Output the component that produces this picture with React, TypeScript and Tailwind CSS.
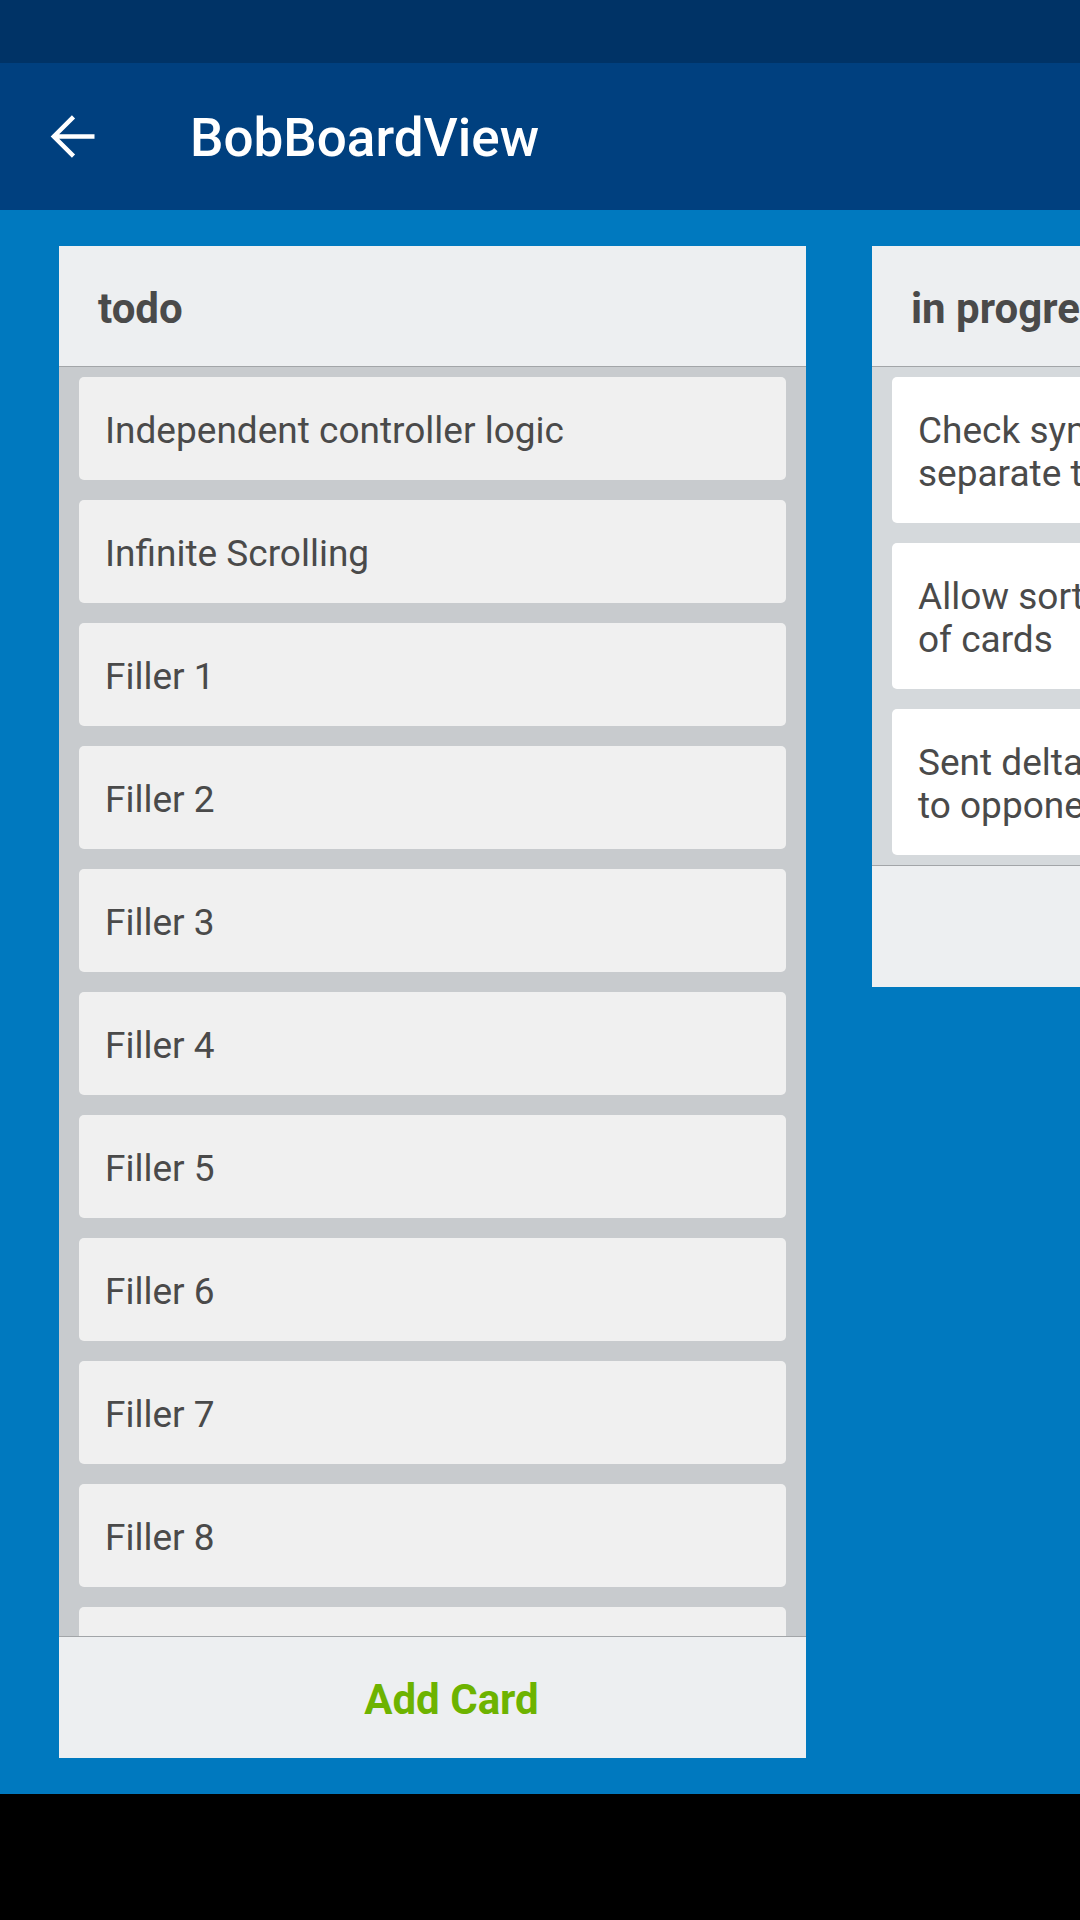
import React from 'react';

interface ColumnProps {
  title: string;
  cards: React.ReactNode[];
  listBg: string;
  cardBg: string;
  footer?: string;
  fill?: boolean;
}

function BackArrow() {
  return (
    <svg width="63" height="63" viewBox="0 0 24 24" fill="none">
      <path
        d="M20 12H4.6M12 4.5 4.5 12l7.5 7.5"
        stroke="#ffffff"
        strokeWidth="1.7"
        strokeLinejoin="miter"
      />
    </svg>
  );
}

function Column({ title, cards, listBg, cardBg, footer, fill }: ColumnProps) {
  return (
    <div
      className={`w-[747px] shrink-0 flex flex-col bg-[#edeff1] ${
        fill ? 'h-[1512px]' : 'self-start'
      }`}
    >
      {/* Column header */}
      <div className="h-[121px] shrink-0 flex items-center pl-[39px] pt-[4px] border-b border-[#a2a5a8] text-[42px] font-bold text-[#4a4a4a]">
        <span className="whitespace-nowrap">{title}</span>
      </div>

      {/* Card list */}
      <div
        className={`${listBg} ${
          fill ? 'flex-1 overflow-hidden' : 'pb-[10px]'
        } px-[20px] pt-[10px] flex flex-col gap-[20px]`}
      >
        {cards.map((c, i) => (
          <div
            key={i}
            className={`${cardBg} shrink-0 rounded-[5px] pl-[26px] pt-[32px] pb-[28px] text-[37px] leading-[43px] text-[#4a4a4a] whitespace-nowrap overflow-hidden`}
          >
            {c}
          </div>
        ))}
      </div>

      {/* Footer */}
      <div className="h-[122px] shrink-0 flex items-center justify-center pt-[4px] border-t border-[#a2a5a8]">
        {footer && (
          <span className="pl-[38px] text-[42px] font-bold text-[#6db300]">
            {footer}
          </span>
        )}
      </div>
    </div>
  );
}

export default function App() {
  const todo = [
    'Independent controller logic',
    'Infinite Scrolling',
    'Filler 1',
    'Filler 2',
    'Filler 3',
    'Filler 4',
    'Filler 5',
    'Filler 6',
    'Filler 7',
    'Filler 8',
    '',
  ];

  const inProgress = [
    <>
      Check synchronization works on
      <br />
      separate threads
    </>,
    <>
      Allow sorting and reordering
      <br />
      of cards
    </>,
    <>
      Sent deltas should be applied
      <br />
      to opponent board
    </>,
  ];

  return (
    <div
      className="w-[1080px] h-[1920px] flex flex-col bg-black overflow-hidden"
      style={{ fontFamily: 'Roboto, "Noto Sans", sans-serif' }}
    >
      {/* Status bar */}
      <div className="h-[63px] shrink-0 bg-[#003366]" />

      {/* App bar */}
      <div className="h-[147px] shrink-0 bg-[#00407f] flex items-center">
        <div className="ml-[42px] w-[63px] h-[63px] flex items-center justify-center">
          <BackArrow />
        </div>
        <span className="ml-[85px] mt-[5px] text-[53px] font-medium text-white">
          BobBoardView
        </span>
      </div>

      {/* Board */}
      <div className="h-[1584px] shrink-0 bg-[#0079bf] flex gap-[66px] pl-[59px] pt-[36px] overflow-hidden">
        <Column
          title="todo"
          cards={todo}
          listBg="bg-[#c8cbce]"
          cardBg="bg-[#f0f0f0]"
          footer="Add Card"
          fill
        />
        <Column
          title="in progress"
          cards={inProgress}
          listBg="bg-[#d5d9dc]"
          cardBg="bg-white"
        />
      </div>
    </div>
  );
}
